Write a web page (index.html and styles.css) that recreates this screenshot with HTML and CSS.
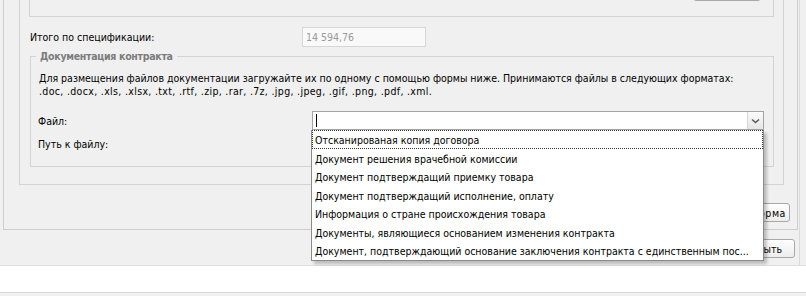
FILE: index.html
```html
<!DOCTYPE html>
<html lang="ru">
<head>
<meta charset="utf-8">
<title>Документация контракта</title>
<link rel="stylesheet" href="styles.css">
</head>
<body>
<div class="screen">
  <div class="main">
    <div class="outer">
      <div class="middle">
        <div class="topbox"><span class="btn btn-top" aria-hidden="true"></span></div>
        <div class="total-row">
          <span class="total-label">Итого по спецификации:</span>
          <span class="total-input">14 594,76</span>
        </div>
        <fieldset class="docs">
          <legend>Документация контракта</legend>
          <p class="hint">Для размещения файлов документации загружайте их по одному с помощью формы ниже. Принимаются файлы в следующих форматах:<br><span class="formats">.doc, .docx, .xls, .xlsx, .txt, .rtf, .zip, .rar, .7z, .jpg, .jpeg, .gif, .png, .pdf, .xml.</span></p>
          <div class="form-grid">
            <span class="label">Файл:</span>
            <div class="combo-wrap">
              <div class="combo">
                <div class="combo-field"><span class="caret"></span></div>
                <div class="combo-btn">
                  <svg width="9" height="6" viewBox="0 0 9 6"><path d="M1 1.5 L4.5 4.5 L8 1.5" fill="none" stroke="#5a5a5a" stroke-width="1.6"/></svg>
                </div>
              </div>
              <ul class="combo-list">
                <li class="focused">Отсканированая копия договора</li>
                <li>Документ решения врачебной комиссии</li>
                <li>Документ подтверждащий приемку товара</li>
                <li>Документ подтверждащий исполнение, оплату</li>
                <li>Информация о стране происхождения товара</li>
                <li>Документы, являющиеся основанием изменения контракта</li>
                <li>Документ, подтверждающий основание заключения контракта с единственным пос...</li>
              </ul>
            </div>
            <span class="label">Путь к файлу:</span>
            <div class="path-field"></div>
          </div>
        </fieldset>
      </div>
      <div class="print-row"><span class="btn btn-print">Печатная форма</span></div>
    </div>
    <div class="bar"><span class="btn btn-close">Закрыть</span></div>
  </div>
  <div class="white-band"></div>
</div>
</body>
</html>
```

FILE: styles.css
```css
* { box-sizing: border-box; margin: 0; padding: 0; }

html, body { width: 806px; height: 296px; overflow: hidden; }

body {
  background: #f0f0f0;
  font-family: "DejaVu Sans Condensed", "Liberation Sans", Arial, sans-serif;
  font-size: 10.5px;
  color: #000;
}

.screen { display: flex; flex-direction: column; height: 296px; }

.main {
  width: 800px;
  height: 265px;
  border-right: 1px solid #dadada;
  display: flex;
  flex-direction: column;
}

.outer {
  margin-left: 3px;
  width: 795px;
  height: 230px;
  border: 1px solid #cdcdcd;
  border-top: 0;
  padding: 0 7px 0 15px;
  display: flex;
  flex-direction: column;
}

.middle {
  width: 765px;
  height: 185px;
  border: 1px solid #d3d3d3;
  border-top: 0;
  padding: 0 9px;
}

.topbox {
  height: 17px;
  border: 1px solid #d3d3d3;
  border-top: 0;
  display: flex;
  justify-content: flex-end;
  align-items: flex-start;
  padding-right: 12px;
}

.btn {
  display: flex;
  align-items: center;
  justify-content: center;
  height: 19px;
  border: 1px solid #a8a8a8;
  border-radius: 3px;
  background: linear-gradient(#ffffff, #ededed);
  color: #000;
  white-space: nowrap;
}

.btn-top { height: 22px; width: 68px; margin-top: -21px; }

.total-row {
  display: flex;
  align-items: center;
  height: 20px;
  margin-top: 10px;
  padding-left: 1px;
}

.total-label { width: 272px; }

.total-input {
  width: 124px;
  height: 20px;
  border: 1px solid #d6d6d6;
  background: #f9f9f9;
  color: #9a9a9a;
  line-height: 18px;
  padding-left: 3px;
}

.docs {
  margin: 3px 0 0 1px;
  width: 744px;
  border: 1px solid #d3d3d3;
  padding: 9px 8px 13px 8px;
}

.docs legend {
  font-weight: bold;
  color: #7c7c7c;
  line-height: 13px;
  padding: 0 4px;
  margin-left: -3px;
  letter-spacing: -0.3px;
}

.hint { line-height: 13px; }

.formats { letter-spacing: 0.33px; }

.form-grid {
  display: grid;
  grid-template-columns: 273px 452px;
  grid-template-rows: 19px 19px;
  row-gap: 4px;
  margin-top: 13px;
  align-items: center;
}

.label { margin-left: -1px; }

.combo-wrap { position: relative; height: 19px; }

.combo {
  display: flex;
  height: 19px;
  border: 1px solid #a3a3a3;
  background: #fff;
}

.combo-field { flex: 1; display: flex; align-items: center; padding-left: 3px; }

.caret { width: 1px; height: 13px; background: #000; }

.combo-btn {
  width: 16px;
  display: flex;
  align-items: center;
  justify-content: center;
  background: linear-gradient(#fbfbfb, #e6e6e6);
  border-left: 1px solid #d6d6d6;
}

.combo-list {
  position: absolute;
  top: 19px;
  left: -1px;
  width: 453px;
  list-style: none;
  background: #fff;
  border: 1px solid #8a8a8a;
  border-top: 0;
  box-shadow: 3px 3px 3px rgba(0, 0, 0, 0.22);
  z-index: 5;
}

.combo-list li {
  height: 18.5px;
  padding-top: 3px;
  line-height: 15.5px;
  padding-left: 3px;
  white-space: nowrap;
  overflow: hidden;
}

.combo-list li.focused {
  outline: 1px dotted #333;
  outline-offset: -1px;
}

.path-field { height: 19px; border: 1px solid #c8c8c8; background: #fff; }

.print-row {
  display: flex;
  justify-content: flex-end;
  margin-top: 18px;
}

.btn-print { padding: 0 3px; letter-spacing: 0.6px; }

.bar {
  display: flex;
  justify-content: flex-end;
  padding: 9px 4px 0 0;
}

.btn-close { width: 68px; }

.white-band {
  height: 28px;
  background: #fff;
  border-top: 1px solid #dedede;
  border-bottom: 1px solid #d9d9d9;
}
```
